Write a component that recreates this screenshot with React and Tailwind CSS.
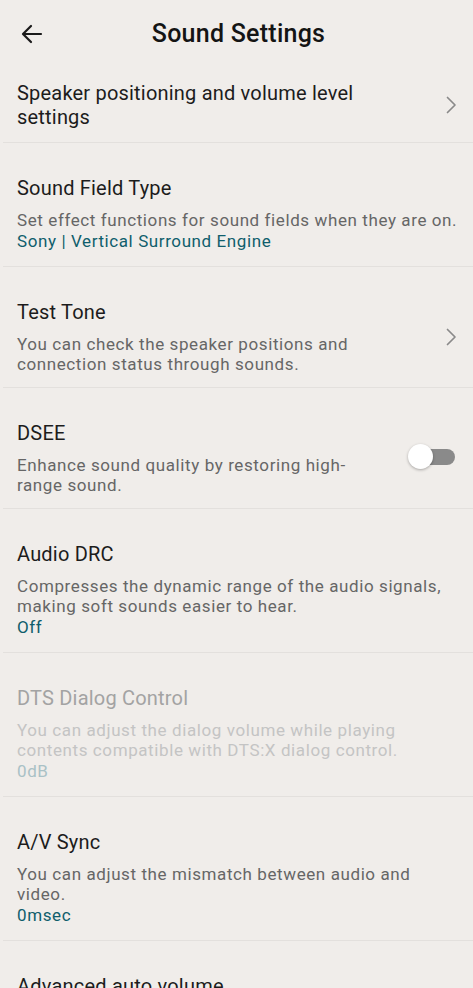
import React from 'react';

const Chevron = () => (
  <svg width="12" height="18" viewBox="0 0 12 18" fill="none" className="shrink-0 mr-[4px]">
    <path d="M2.5 1.5l7.5 7.5-7.5 7.5" stroke="#8a8a8a" strokeWidth="1.7" strokeLinecap="round" strokeLinejoin="round" />
  </svg>
);

const Toggle = () => (
  <div className="relative w-[47px] h-[26px] shrink-0 mr-[6px] -mt-[2px]">
    <div className="absolute right-0 top-[5px] w-[40px] h-[16px] rounded-full bg-[#8a8a8a]" />
    <div className="absolute left-0 top-0 w-[25px] h-[25px] rounded-full bg-white shadow-[0_1px_3px_rgba(0,0,0,0.3)]" />
  </div>
);

const Divider = () => <div className="ml-[3px] h-px bg-[#e3e0dd]" />;

const Row = ({ title, desc, value, right, disabled }) => (
  <div className="flex items-center pl-[17px] pr-[12px] pt-[33px] pb-[13px]">
    <div className={right ? 'flex-1 min-w-0 pr-[40px]' : 'flex-1 min-w-0'}>
      <div className={`text-[20px] leading-[24px] tracking-[0.01em] ${disabled ? 'text-[#a3a3a3]' : 'text-[#1c1c1c]'}`}>{title}</div>
      {desc && (
        <div className={`mt-[10px] text-[17px] leading-[20px] tracking-[0.035em] ${disabled ? 'text-[#c4c4c4]' : 'text-[#666666]'}`}>
          {desc}
        </div>
      )}
      {value && (
        <div className={`text-[17px] leading-[23px] tracking-[0.035em] ${disabled ? 'text-[#a9c1c6]' : 'text-[#0f5e6c]'}`}>
          {value}
        </div>
      )}
    </div>
    {right}
  </div>
);

export default function App() {
  return (
    <div className="min-h-screen bg-[#f0edea] font-['Roboto',sans-serif] overflow-hidden">
      {/* Header */}
      <div className="relative flex items-center justify-center h-[68px]">
        <svg className="absolute left-[21px] top-[23px]" width="22" height="22" viewBox="0 0 22 22" fill="none">
          <path d="M20 11H3M10 3l-8 8 8 8" stroke="#1a1a1a" strokeWidth="2.2" strokeLinecap="round" strokeLinejoin="round" />
        </svg>
        <h1 className="text-[25px] font-medium text-[#141414] tracking-[0.01em] ml-[4px]">Sound Settings</h1>
      </div>

      {/* Speaker positioning */}
      <div className="flex items-center pl-[17px] pr-[12px] pt-[13px] pb-[13px]">
        <div className="flex-1 min-w-0 pr-[40px] text-[20px] leading-[24px] tracking-[0.01em] text-[#1c1c1c]">
          Speaker positioning and volume level settings
        </div>
        <Chevron />
      </div>
      <Divider />

      <Row
        title="Sound Field Type"
        desc="Set effect functions for sound fields when they are on."
        value="Sony | Vertical Surround Engine"
      />
      <Divider />

      <Row
        title="Test Tone"
        desc="You can check the speaker positions and connection status through sounds."
        right={<Chevron />}
      />
      <Divider />

      <Row
        title="DSEE"
        desc="Enhance sound quality by restoring high-range sound."
        right={<Toggle />}
      />
      <Divider />

      <Row
        title="Audio DRC"
        desc="Compresses the dynamic range of the audio signals, making soft sounds easier to hear."
        value="Off"
      />
      <Divider />

      <Row
        title="DTS Dialog Control"
        desc="You can adjust the dialog volume while playing contents compatible with DTS:X dialog control."
        value="0dB"
        disabled
      />
      <Divider />

      <Row
        title="A/V Sync"
        desc="You can adjust the mismatch between audio and video."
        value="0msec"
      />
      <Divider />

      <Row title="Advanced auto volume" />
    </div>
  );
}
